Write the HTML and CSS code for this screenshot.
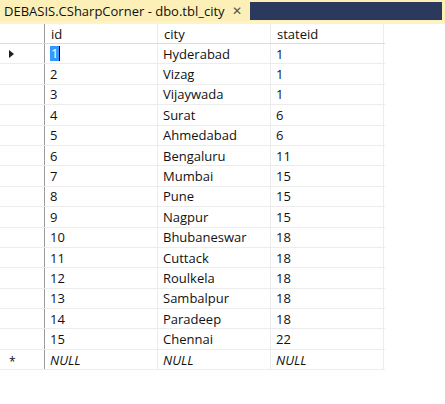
FILE: index.html
```html
<!DOCTYPE html>
<html>
<head>
<meta charset="utf-8">
<link rel="stylesheet" href="styles.css">
</head>
<body>
<div class="tabbar">
  <div class="tab"><span class="tab-title">DEBASIS.CSharpCorner - dbo.tbl_city</span><span class="close">✕</span></div>
  <div class="tabfill"></div>
</div>
<div class="tabline"></div>
<div class="grid">
  <div class="row head"><div class="rh"></div><div class="c">id</div><div class="c">city</div><div class="c">stateid</div></div>
  <div class="row"><div class="rh"><span class="arrow"></span></div><div class="c"><span class="sel">1</span><span class="caret"></span></div><div class="c">Hyderabad</div><div class="c">1</div></div>
  <div class="row"><div class="rh"></div><div class="c">2</div><div class="c">Vizag</div><div class="c">1</div></div>
  <div class="row"><div class="rh"></div><div class="c">3</div><div class="c">Vijaywada</div><div class="c">1</div></div>
  <div class="row"><div class="rh"></div><div class="c">4</div><div class="c">Surat</div><div class="c">6</div></div>
  <div class="row"><div class="rh"></div><div class="c">5</div><div class="c">Ahmedabad</div><div class="c">6</div></div>
  <div class="row"><div class="rh"></div><div class="c">6</div><div class="c">Bengaluru</div><div class="c">11</div></div>
  <div class="row"><div class="rh"></div><div class="c">7</div><div class="c">Mumbai</div><div class="c">15</div></div>
  <div class="row"><div class="rh"></div><div class="c">8</div><div class="c">Pune</div><div class="c">15</div></div>
  <div class="row"><div class="rh"></div><div class="c">9</div><div class="c">Nagpur</div><div class="c">15</div></div>
  <div class="row"><div class="rh"></div><div class="c">10</div><div class="c">Bhubaneswar</div><div class="c">18</div></div>
  <div class="row"><div class="rh"></div><div class="c">11</div><div class="c">Cuttack</div><div class="c">18</div></div>
  <div class="row"><div class="rh"></div><div class="c">12</div><div class="c">Roulkela</div><div class="c">18</div></div>
  <div class="row"><div class="rh"></div><div class="c">13</div><div class="c">Sambalpur</div><div class="c">18</div></div>
  <div class="row"><div class="rh"></div><div class="c">14</div><div class="c">Paradeep</div><div class="c">18</div></div>
  <div class="row"><div class="rh"></div><div class="c">15</div><div class="c">Chennai</div><div class="c">22</div></div>
  <div class="row"><div class="rh"><span class="star">*</span></div><div class="c null">NULL</div><div class="c null">NULL</div><div class="c null">NULL</div></div>
</div>
</body>
</html>
```
FILE: styles.css
```css
* { box-sizing: border-box; }
html, body { margin: 0; padding: 0; background: #ffffff; }
body {
  width: 445px;
  height: 404px;
  overflow: hidden;
  font-family: "Open Sans", "Noto Sans", sans-serif;
  font-size: 13px;
  color: #111111;
}
.tabbar {
  display: flex;
  height: 21px;
  background: #fcf0b8;
}
.tab {
  width: 250px;
  display: flex;
  align-items: center;
  padding-left: 4px;
  gap: 7px;
}
.tab-title { font-size: 13px; color: #111111; white-space: nowrap; }
.close { font-size: 12px; color: #555; }
.tabfill {
  width: 192px;
  margin-top: 2px;
  height: 18px;
  background: #2b3a5c;
}
.tabline { height: 3px; background: #fdf3c4; }
.grid { width: 385px; }
.row {
  display: flex;
  height: 20.4px;
  border-bottom: 1px solid #ececec;
}
.row.head { height: 20px; border-bottom: 1px solid #dcdcdc; }
.rh {
  width: 45px;
  border-right: 1px solid #9a9a9a;
  display: flex;
  align-items: center;
  padding-left: 9px;
}
.c {
  width: 113px;
  border-right: 1px solid #ececec;
  padding-left: 5px;
  display: flex;
  align-items: center;
  white-space: nowrap;
}
.head .c { padding-left: 6px; }
.arrow {
  width: 0; height: 0;
  border-top: 4px solid transparent;
  border-bottom: 4px solid transparent;
  border-left: 5px solid #1e1e1e;
}
.star { font-size: 12px; line-height: 1; margin-top: 4px; }
.sel { background: #3399ff; color: #ffffff; padding: 0 1px; line-height: 15px; }
.caret { width: 1px; height: 15px; background: #000; }
.null { font-style: italic; }
```
